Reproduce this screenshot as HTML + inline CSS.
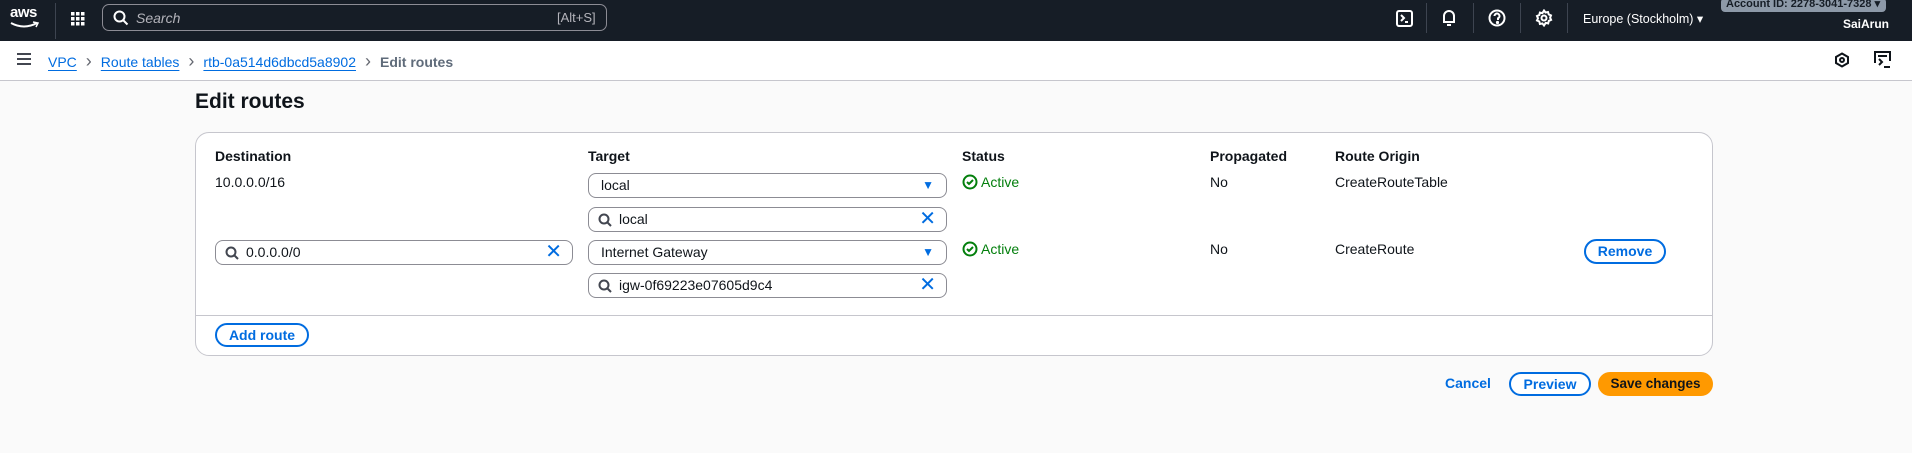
<!DOCTYPE html>
<html><head><meta charset="utf-8"><style>
*{box-sizing:border-box;margin:0;padding:0}
body{width:1912px;height:453px;background:#fafafa;font-family:"Liberation Sans",sans-serif;font-size:14px;color:#0f141a;position:relative;overflow:hidden}
.abs{position:absolute}
.top{left:0;top:0;width:1912px;height:41px;background:#161d26}
.crumb{left:0;top:41px;width:1912px;height:40px;background:#fff;border-bottom:1px solid #c6c6cd}
.lnk{color:#006ce0;text-decoration:underline;text-underline-offset:3px}
.panel{left:195px;top:132px;width:1518px;height:224px;background:#fff;border:1px solid #c6c6cd;border-radius:14px}
.hd{font-weight:bold;font-size:14px}
.box{border:1px solid #8c8c94;border-radius:8px;height:25px;background:#fff;font-size:14px;line-height:23px;padding-left:12px}
.btn{border:2px solid #006ce0;border-radius:20px;color:#006ce0;font-weight:bold;text-align:center;font-size:14px;background:#fff}
.act{color:#037f0c}
.x{color:#006ce0;font-size:20px;line-height:22px}
.sep{color:#656871;font-size:18px;margin:0 9px}
</style></head><body>
<div class="abs top"></div>
<div class="abs" style="left:10px;top:4px;color:#fff;font-weight:bold;font-size:15px;letter-spacing:-0.5px">aws</div>
<svg class="abs" style="left:10px;top:21px" width="30" height="8"><path d="M1 2 Q14 9 27 2" stroke="#fff" stroke-width="2" fill="none"/><path d="M23 1 L28 2 L26 6" stroke="#fff" stroke-width="1.5" fill="none"/></svg>
<div class="abs" style="left:55px;top:3px;width:1px;height:36px;background:#3d4450"></div>
<svg class="abs" style="left:71px;top:12px" width="14" height="14" fill="#fff"><rect x="0" y="0" width="3.5" height="3.5"/><rect x="5" y="0" width="3.5" height="3.5"/><rect x="10" y="0" width="3.5" height="3.5"/><rect x="0" y="5" width="3.5" height="3.5"/><rect x="5" y="5" width="3.5" height="3.5"/><rect x="10" y="5" width="3.5" height="3.5"/><rect x="0" y="10" width="3.5" height="3.5"/><rect x="5" y="10" width="3.5" height="3.5"/><rect x="10" y="10" width="3.5" height="3.5"/></svg>
<div class="abs" style="left:102px;top:4px;width:505px;height:27px;border:1px solid #8c8c94;border-radius:7px"></div>
<svg class="abs" style="left:113px;top:10px" width="16" height="16" fill="none" stroke="#fff" stroke-width="2"><circle cx="6.5" cy="6.5" r="5"/><path d="M10 10l4.5 4.5"/></svg>
<div class="abs" style="left:136px;top:10px;color:#b4b4bb;font-style:italic;font-size:14px">Search</div>
<div class="abs" style="left:557px;top:10px;color:#b4b4bb;font-size:13px">[Alt+S]</div>
<svg class="abs" style="left:1396px;top:10px" width="18" height="18" fill="none" stroke="#fff" stroke-width="2"><rect x="1" y="1" width="15" height="15" rx="2"/><path d="M5 5l3 3-3 3M9 12h3"/></svg>
<div class="abs" style="left:1426px;top:3px;width:1px;height:30px;background:#3d4450"></div>
<svg class="abs" style="left:1441px;top:9px" width="16" height="18" fill="none" stroke="#fff" stroke-width="2"><path d="M3 13V7a5 5 0 0 1 10 0v6H2h12M6 16h4"/></svg>
<div class="abs" style="left:1473px;top:3px;width:1px;height:30px;background:#3d4450"></div>
<svg class="abs" style="left:1488px;top:9px" width="18" height="18" fill="none" stroke="#fff" stroke-width="2"><circle cx="9" cy="9" r="7.5"/><path d="M6.5 7a2.5 2.5 0 1 1 3.5 2.3V11"/><circle cx="9.5" cy="13.5" r="0.6" fill="#fff"/></svg>
<div class="abs" style="left:1520px;top:3px;width:1px;height:30px;background:#3d4450"></div>
<svg class="abs" style="left:1535px;top:9px" width="18" height="18" fill="none" stroke="#fff" stroke-width="2"><circle cx="9" cy="9" r="2.5"/><path d="M9 1.5l1.5 2 2.5-.5.7 2.4 2.3 1-.9 2.3 1 2.2-2.3 1-.6 2.5-2.5-.5L9 16.5l-1.6-2-2.5.5-.6-2.5-2.3-1 1-2.2-1-2.3 2.3-1 .6-2.4 2.5.5z"/></svg>
<div class="abs" style="left:1567px;top:3px;width:1px;height:30px;background:#3d4450"></div>
<div class="abs" style="left:1583px;top:11px;color:#fff;font-size:12.5px">Europe (Stockholm) ▾</div>
<div class="abs" style="left:1721px;top:-2px;width:165px;height:14px;background:#8d99a8;border-radius:4px;color:#161d26;font-size:11px;font-weight:bold;padding-left:5px;line-height:13px">Account ID: 2278-3041-7328 ▾</div>
<div class="abs" style="left:1843px;top:17px;color:#fff;font-size:12px;font-weight:bold">SaiArun</div>

<div class="abs crumb"></div>
<div class="abs" style="left:17px;top:53px;width:14px;height:2px;background:#424650;box-shadow:0 5px 0 #424650,0 10px 0 #424650"></div>
<div class="abs" style="left:48px;top:51px;font-size:14px;color:#656871;white-space:nowrap"><span class="lnk">VPC</span><span class="sep">›</span><span class="lnk">Route tables</span><span class="sep">›</span><span class="lnk">rtb-0a514d6dbcd5a8902</span><span class="sep">›</span><b style="color:#5f6b7a">Edit routes</b></div>
<svg class="abs" style="left:1834px;top:52px" width="16" height="16" fill="none" stroke="#0f141a" stroke-width="2"><path d="M8 1.5l6 3.5v6l-6 3.5-6-3.5v-6z"/><circle cx="8" cy="8" r="2"/></svg>
<svg class="abs" style="left:1874px;top:51px" width="18" height="18" fill="none" stroke="#0f141a" stroke-width="2"><path d="M1 12V1h15v9M4 5h9M5 8l3 3-3 3M10 16h6"/></svg>

<div class="abs" style="left:195px;top:90px;font-size:21px;font-weight:bold">Edit routes</div>

<div class="abs panel"></div>
<div class="abs hd" style="left:215px;top:148px">Destination</div>
<div class="abs hd" style="left:588px;top:148px">Target</div>
<div class="abs hd" style="left:962px;top:148px">Status</div>
<div class="abs hd" style="left:1210px;top:148px">Propagated</div>
<div class="abs hd" style="left:1335px;top:148px">Route Origin</div>

<div class="abs" style="left:215px;top:174px">10.0.0.0/16</div>
<div class="abs box" style="left:588px;top:173px;width:359px">local<span class="abs" style="right:12px;top:0;color:#006ce0;font-size:12px">▼</span></div>
<div class="abs box" style="left:588px;top:207px;width:359px;padding-left:30px">local<span class="abs x" style="right:10px;top:0">✕</span></div>
<div class="abs box" style="left:215px;top:240px;width:358px;padding-left:30px">0.0.0.0/0<span class="abs x" style="right:10px;top:0">✕</span></div>
<div class="abs box" style="left:588px;top:240px;width:359px">Internet Gateway<span class="abs" style="right:12px;top:0;color:#006ce0;font-size:12px">▼</span></div>
<div class="abs box" style="left:588px;top:273px;width:359px;padding-left:30px">igw-0f69223e07605d9c4<span class="abs x" style="right:10px;top:0">✕</span></div>
<svg class="abs" style="left:598px;top:213px" width="14" height="14" fill="none" stroke="#424650" stroke-width="2"><circle cx="6" cy="6" r="4.5"/><path d="M9.5 9.5l3.5 3.5"/></svg>
<svg class="abs" style="left:225px;top:246px" width="14" height="14" fill="none" stroke="#424650" stroke-width="2"><circle cx="6" cy="6" r="4.5"/><path d="M9.5 9.5l3.5 3.5"/></svg>
<svg class="abs" style="left:598px;top:279px" width="14" height="14" fill="none" stroke="#424650" stroke-width="2"><circle cx="6" cy="6" r="4.5"/><path d="M9.5 9.5l3.5 3.5"/></svg>

<svg class="abs" style="left:962px;top:174px" width="16" height="16" fill="none" stroke="#037f0c" stroke-width="2"><circle cx="8" cy="8" r="6.5"/><path d="M5 8l2 2 4-4"/></svg>
<div class="abs act" style="left:981px;top:174px">Active</div>
<svg class="abs" style="left:962px;top:241px" width="16" height="16" fill="none" stroke="#037f0c" stroke-width="2"><circle cx="8" cy="8" r="6.5"/><path d="M5 8l2 2 4-4"/></svg>
<div class="abs act" style="left:981px;top:241px">Active</div>
<div class="abs" style="left:1210px;top:174px">No</div>
<div class="abs" style="left:1335px;top:174px">CreateRouteTable</div>
<div class="abs" style="left:1210px;top:241px">No</div>
<div class="abs" style="left:1335px;top:241px">CreateRoute</div>
<div class="abs btn" style="left:1584px;top:239px;width:82px;height:25px;line-height:21px">Remove</div>

<div class="abs" style="left:196px;top:315px;width:1516px;height:1px;background:#c6c6cd"></div>
<div class="abs btn" style="left:215px;top:323px;width:94px;height:24px;line-height:20px">Add route</div>

<div class="abs" style="left:1445px;top:375px;color:#006ce0;font-weight:bold">Cancel</div>
<div class="abs btn" style="left:1509px;top:372px;width:82px;height:24px;line-height:20px">Preview</div>
<div class="abs btn" style="left:1598px;top:372px;width:115px;height:24px;line-height:20px;background:#ff9900;border-color:#ff9900;color:#0f141a;font-size:13.5px">Save changes</div>
</body></html>
